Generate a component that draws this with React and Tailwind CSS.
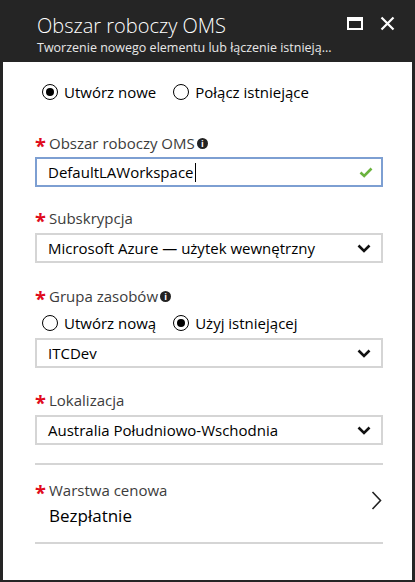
import React from "react";

const Star = () => <span className="text-[#e00b1c] text-[20px] leading-none w-[14px] inline-block mt-[6px] font-bold">*</span>;

const Label = ({ children, info, cls }) => (
  <div className={`flex items-center h-[20px] ${cls}`}>
    <Star />
    <span className="text-[15px] text-[#3c3c3c] leading-none">{children}</span>
    {info && (
      <span className="ml-[2px] w-[11px] h-[11px] rounded-full bg-[#222] text-white text-[9px] font-bold leading-none flex items-center justify-center">i</span>
    )}
  </div>
);

const Radio = ({ checked, label }) => (
  <div className="flex items-center gap-[6px]">
    <span className="w-[16px] h-[16px] rounded-full border-[1.5px] border-black flex items-center justify-center">
      {checked && <span className="w-[8px] h-[8px] rounded-full bg-black" />}
    </span>
    <span className="text-[15px] text-black leading-none">{label}</span>
  </div>
);

const Chevron = () => (
  <svg width="14" height="9" viewBox="0 0 14 9"><path d="M1.5 1.5 L7 7 L12.5 1.5" fill="none" stroke="#111" strokeWidth="2.6" /></svg>
);

const Select = ({ value, cls }) => (
  <div className={`h-[30px] border-2 border-[#d5d5d5] flex items-center justify-between pl-[11px] pr-[10px] ${cls}`}>
    <span className="text-[15px] text-black leading-none">{value}</span>
    <Chevron />
  </div>
);

export default function App() {
  return (
    <div className="w-[415px] h-[582px] bg-[#252525] flex flex-col" style={{ fontFamily: '"Open Sans", "Noto Sans", sans-serif' }}>
      <div className="h-[62px] relative pl-[37px] pt-[12px]">
        <div className="text-white text-[20px] font-light leading-[27px]">Obszar roboczy OMS</div>
        <div className="text-[#e8e8e8] text-[12.5px] leading-[18px]">Tworzenie nowego elementu lub łączenie istnieją...</div>
        <div className="absolute left-[347px] top-[17px] w-[16px] h-[13px] border-2 border-t-[4px] border-white" />
        <svg className="absolute left-[380px] top-[16px]" width="15" height="15" viewBox="0 0 15 15">
          <path d="M1.5 1.5 L13.5 13.5 M13.5 1.5 L1.5 13.5" stroke="white" strokeWidth="2.2" />
        </svg>
      </div>
      <div className="flex-1 mx-[3px] mb-[2px] bg-white pl-[32px] pr-[29px] flex flex-col">
        <div className="h-[24px] mt-[18px] flex items-center gap-[17px] pl-[7px]">
          <Radio checked label="Utwórz nowe" />
          <Radio label="Połącz istniejące" />
        </div>
        <Label info cls="mt-[29px]">Obszar roboczy OMS</Label>
        <div className="mt-[4px] h-[30px] border-2 border-[#7d9fd2] flex items-center justify-between pl-[11px] pr-[8px]">
          <span className="text-[15px] text-black leading-none flex items-center">DefaultLAWorkspace<span className="w-px h-[19px] bg-black ml-px" /></span>
          <svg width="14" height="11" viewBox="0 0 14 11"><path d="M1.5 5.5 L5.2 9 L12.5 1.5" fill="none" stroke="#6bb33e" strokeWidth="2.6" /></svg>
        </div>
        <Label cls="mt-[21px]">Subskrypcja</Label>
        <Select cls="mt-[5px]" value="Microsoft Azure — użytek wewnętrzny" />
        <Label info cls="mt-[23px]">Grupa zasobów</Label>
        <div className="h-[24px] mt-[5px] flex items-center gap-[17px] pl-[7px]">
          <Radio label="Utwórz nową" />
          <Radio checked label="Użyj istniejącej" />
        </div>
        <Select cls="mt-[3px]" value="ITCDev" />
        <Label cls="mt-[22px]">Lokalizacja</Label>
        <Select cls="mt-[5px]" value="Australia Południowo-Wschodnia" />
        <div className="mt-[18px] h-[2px] bg-[#d5d5d5]" />
        <div className="flex items-center justify-between">
          <div className="flex flex-col">
            <Label cls="mt-[15px]">Warstwa cenowa</Label>
            <div className="mt-[3px] h-[24px] pl-[14px] text-[17px] text-black leading-none flex items-center">Bezpłatnie</div>
          </div>
          <svg className="mr-[1px] mt-[8px]" width="11" height="19" viewBox="0 0 11 19"><path d="M1.5 1 L9.5 9.5 L1.5 18" fill="none" stroke="#222" strokeWidth="1.6" /></svg>
        </div>
        <div className="mt-[15px] h-[2px] bg-[#d5d5d5]" />
      </div>
    </div>
  );
}
